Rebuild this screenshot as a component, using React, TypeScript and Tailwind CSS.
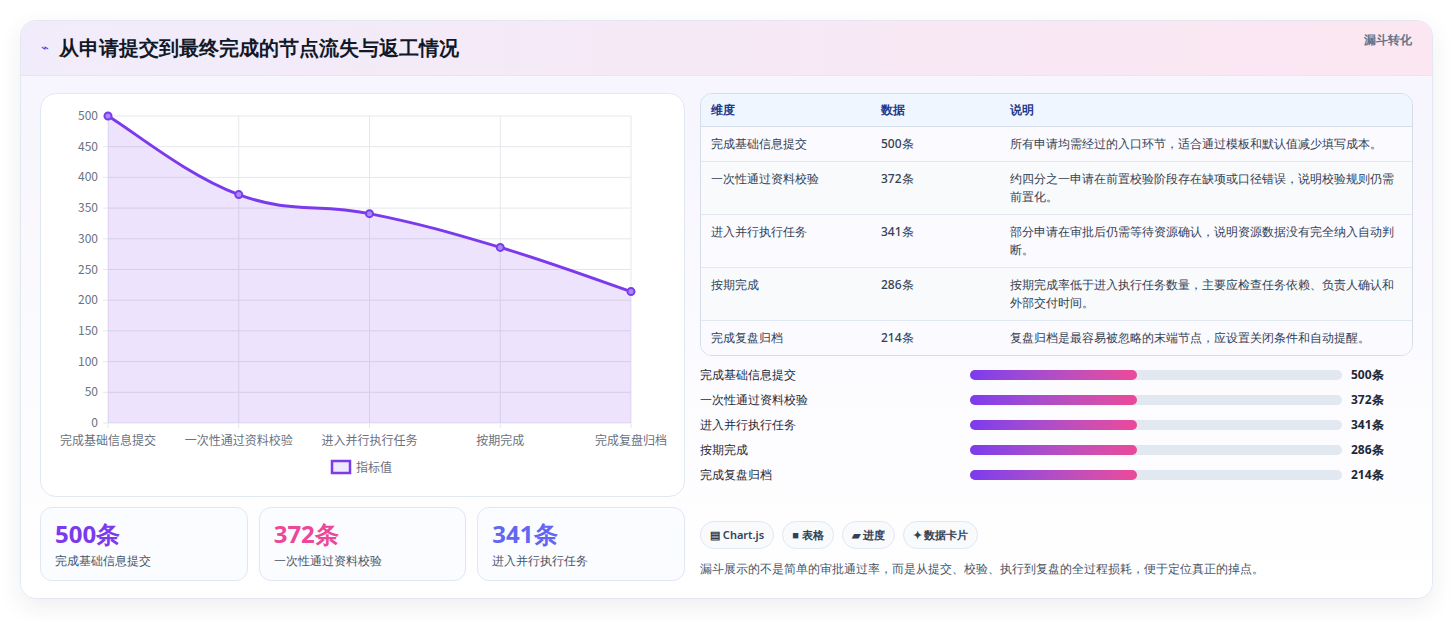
import React from 'react';

const rows = [
  { name: '完成基础信息提交', value: 500, desc: '所有申请均需经过的入口环节，适合通过模板和默认值减少填写成本。' },
  { name: '一次性通过资料校验', value: 372, desc: '约四分之一申请在前置校验阶段存在缺项或口径错误，说明校验规则仍需前置化。' },
  { name: '进入并行执行任务', value: 341, desc: '部分申请在审批后仍需等待资源确认，说明资源数据没有完全纳入自动判断。' },
  { name: '按期完成', value: 286, desc: '按期完成率低于进入执行任务数量，主要应检查任务依赖、负责人确认和外部交付时间。' },
  { name: '完成复盘归档', value: 214, desc: '复盘归档是最容易被忽略的末端节点，应设置关闭条件和自动提醒。' },
];

function Chart() {
  const L = 67, R = 590, T = 22, B = 329;
  const xs = rows.map((_, i) => L + ((R - L) / 4) * i);
  const ys = rows.map((r) => B - (r.value / 500) * (B - T));
  let d = `M${xs[0]},${ys[0]}`;
  for (let i = 0; i < 4; i++) {
    const x0 = xs[Math.max(i - 1, 0)], y0 = ys[Math.max(i - 1, 0)];
    const x1 = xs[i], y1 = ys[i], x2 = xs[i + 1], y2 = ys[i + 1];
    const x3 = xs[Math.min(i + 2, 4)], y3 = ys[Math.min(i + 2, 4)];
    const t = 0.2;
    d += ` C${x1 + (x2 - x0) * t},${y1 + (y2 - y0) * t} ${x2 - (x3 - x1) * t},${y2 - (y3 - y1) * t} ${x2},${y2}`;
  }
  const area = `${d} L${R},${B} L${L},${B} Z`;
  const ticks = [0, 50, 100, 150, 200, 250, 300, 350, 400, 450, 500];
  return (
    <svg width="644" height="402" className="block" style={{ fontFamily: '"Noto Sans CJK SC", sans-serif' }}>
      {ticks.map((t) => {
        const y = B - (t / 500) * (B - T);
        return (
          <g key={t}>
            <line x1={L - 5} x2={R} y1={y} y2={y} stroke="#e5e7eb" />
            <text x={L - 10} y={y + 4} textAnchor="end" fontSize="12" fill="#6b7280">{t}</text>
          </g>
        );
      })}
      {xs.map((x, i) => (
        <g key={i}>
          <line x1={x} x2={x} y1={T} y2={B + 5} stroke="#e5e7eb" />
          <text x={x} y={B + 22} textAnchor="middle" fontSize="12" fill="#6b7280">{rows[i].name}</text>
        </g>
      ))}
      <path d={area} fill="#7c3aed" fillOpacity="0.14" />
      <path d={d} fill="none" stroke="#7c3aed" strokeWidth="3" />
      {xs.map((x, i) => (
        <circle key={i} cx={x} cy={ys[i]} r="3.5" fill="#a78bfa" stroke="#7c3aed" strokeWidth="2" />
      ))}
      <rect x="291" y="367" width="18" height="12" fill="#ede9fe" stroke="#7c3aed" strokeWidth="2.5" />
      <text x="315" y="378" fontSize="12" fill="#6b7280">指标值</text>
    </svg>
  );
}

export default function App() {
  const stats = [
    { v: '500条', l: '完成基础信息提交', c: 'text-[#7c3aed]' },
    { v: '372条', l: '一次性通过资料校验', c: 'text-[#ec4899]' },
    { v: '341条', l: '进入并行执行任务', c: 'text-[#6366f1]' },
  ];
  return (
    <div className="min-h-[621px] bg-white p-5 font-['Noto_Sans_CJK_SC',sans-serif]">
      <div className="overflow-hidden rounded-2xl border border-[#e5e7f0] bg-white shadow-[0_8px_24px_rgba(30,41,59,0.08)]">
        <div className="flex items-center justify-between border-b border-[#ebe4f7] bg-gradient-to-r from-[#f1ecfb] to-[#fbe6f1] px-5 h-[55px]">
          <div className="flex items-center gap-2.5">
            <span className="text-[13px] text-[#4f46e5]">⌁</span>
            <h1 className="text-[20px] font-bold text-[#111827]">从申请提交到最终完成的节点流失与返工情况</h1>
          </div>
          <span className="-mt-4 text-[12px] font-semibold text-[#64748b]">漏斗转化</span>
        </div>
        <div className="flex gap-[15px] bg-gradient-to-b from-[#f7f5fd] to-white px-[19px] pt-[17px] pb-[17px]">
          <div className="w-[645px] flex-none">
            <div className="h-[404px] rounded-2xl border border-[#e2e8f0] bg-white">
              <Chart />
            </div>
            <div className="mt-[10px] grid grid-cols-3 gap-[11px]">
              {stats.map((s) => (
                <div key={s.v} className="h-[74px] rounded-xl border border-[#dfe7f3] bg-[#fafcff] px-[14px] pt-[10px]">
                  <div className={`text-[24px] font-bold leading-[32px] ${s.c}`}>{s.v}</div>
                  <div className="mt-[2px] text-[12px] text-[#475569]">{s.l}</div>
                </div>
              ))}
            </div>
          </div>
          <div className="flex-1">
            <div className="overflow-hidden rounded-xl border border-[#d5dde8] text-[12px] text-[#334155]">
              <div className="grid grid-cols-[170px_129px_1fr] h-[33px] items-center border-b border-[#d5dde8] bg-[#eff6ff] px-[10px] font-semibold text-[#1e3a8a]">
                <span>维度</span><span>数据</span><span>说明</span>
              </div>
              {rows.map((r, i) => (
                <div key={r.name} className={`grid grid-cols-[170px_129px_1fr] items-start px-[10px] py-[8px] leading-[18px] ${i < 4 ? 'border-b border-[#e2e8f0]' : ''} ${i % 2 === 0 ? 'bg-[#fbfaff]' : 'bg-[#f8fafc]'}`}>
                  <span className="font-medium">{r.name}</span>
                  <span className="font-medium">{r.value}条</span>
                  <span className="pr-[6px] font-medium">{r.desc}</span>
                </div>
              ))}
            </div>
            <div className="mt-[12px] flex flex-col gap-[11px]">
              {rows.map((r) => (
                <div key={r.name} className="flex items-center h-[14px] text-[12px]">
                  <span className="w-[270px] text-[#1f2937]">{r.name}</span>
                  <div className="h-[10px] w-[372px] rounded-full bg-[#e2e8f0]">
                    <div className="h-full w-[45%] rounded-full bg-gradient-to-r from-[#7c3aed] to-[#ec4899]" />
                  </div>
                  <span className="ml-[9px] font-bold text-[#1f2937]">{r.value}条</span>
                </div>
              ))}
            </div>
            <div className="mt-[39px] flex gap-[8px] text-[11px] font-semibold text-[#334155]">
              {['▤ Chart.js', '■ 表格', '▰ 进度', '✦ 数据卡片'].map((c) => (
                <span key={c} className="flex h-[28px] items-center rounded-full border border-[#e2e8f0] bg-[#f8fafc] px-[9px]">{c}</span>
              ))}
            </div>
            <p className="mt-[11px] text-[12px] text-[#475569]">漏斗展示的不是简单的审批通过率，而是从提交、校验、执行到复盘的全过程损耗，便于定位真正的掉点。</p>
          </div>
        </div>
      </div>
    </div>
  );
}
